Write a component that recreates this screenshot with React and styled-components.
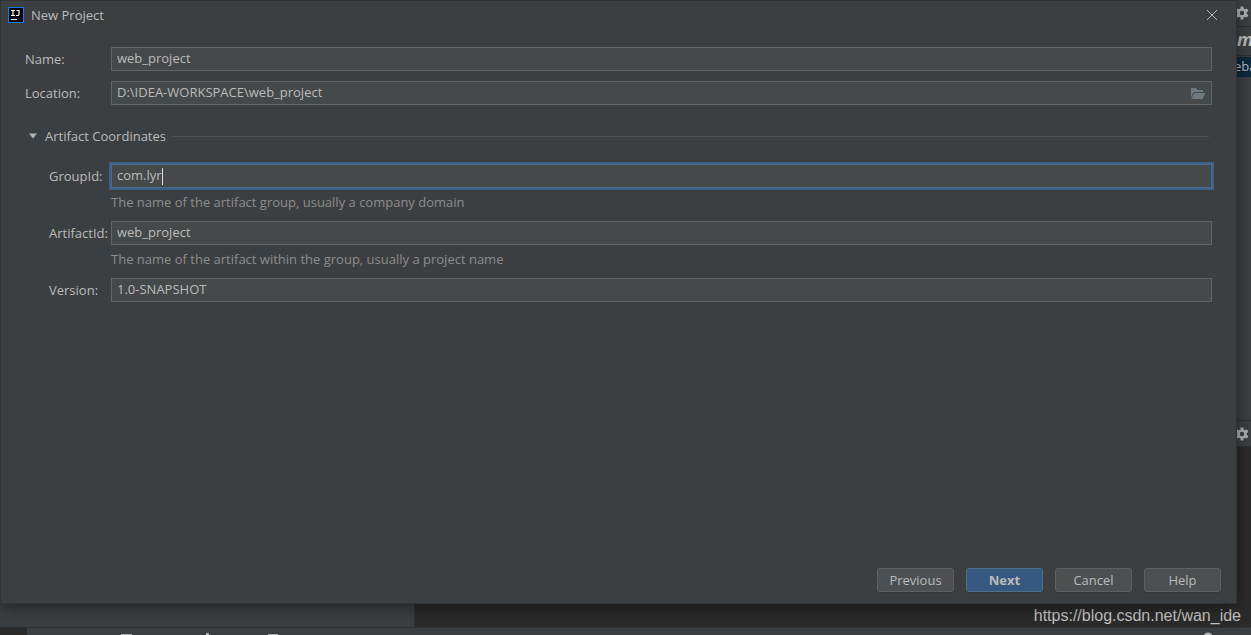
import React from 'react';
import styled, { createGlobalStyle } from 'styled-components';

const GlobalStyle = createGlobalStyle`
  * {
    box-sizing: border-box;
  }
  body {
    margin: 0;
    background: #2b2b2b;
    color: #bbbbbb;
    font-family: 'Open Sans', 'Noto Sans', sans-serif;
    font-size: 13px;
    line-height: 18px;
  }
  button, input {
    font: inherit;
    color: inherit;
  }
`;

const Desktop = styled.div`
  display: grid;
  grid-template: minmax(100vh, auto) / minmax(0, 1fr);
  overflow: hidden;
`;

/* the IDE window that stays visible around the dialog */

const Ide = styled.div`
  grid-area: 1 / 1;
  display: flex;
  flex-direction: column;
  overflow: hidden;
  background: #3c3f41;
`;

const IdeTop = styled.div`
  display: flex;
  justify-content: flex-end;
  flex: 7;
`;

const MavenPanel = styled.div`
  width: 18px;
  overflow: hidden;
`;

const PanelHeader = styled.div`
  display: flex;
  align-items: center;
  justify-content: flex-end;
  height: 27px;
  padding-right: 2px;
  border-bottom: 1px solid #2d2f30;
`;

const PanelToolbar = styled.div`
  height: 29px;
  padding-left: 4px;
  border-bottom: 1px solid #2d2f30;
  font-size: 18px;
  font-style: italic;
  font-weight: bold;
  line-height: 24px;
`;

const TreeRow = styled.div`
  height: 20px;
  margin-top: 1px;
  padding-left: 1px;
  background: #0d293e;
  line-height: 18px;
`;

const ConsoleHeader = styled(PanelHeader)`
  border-top: 1px solid #2d2f30;
`;

const IdeBottom = styled.div`
  display: flex;
  flex: 3;
`;

const Services = styled.div`
  width: 33.2%;
  border-right: 1px solid #323232;
`;

const Console = styled.div`
  display: flex;
  align-items: flex-end;
  justify-content: flex-end;
  flex: 1;
  padding: 0 10px 1px 0;
  background: #2b2b2b;
`;

const Watermark = styled.span`
  color: #c4c4c4;
  font-family: 'Liberation Sans', Arial, sans-serif;
  font-size: 16px;
  line-height: 20px;
`;

const StatusBar = styled.div`
  height: 8px;
  padding-left: 27px;
  border-top: 1px solid #323232;
  background: linear-gradient(90deg, #2b2b2b 27px, #3c3f41 27px);
`;

const StatusIcons = styled.svg`
  display: block;
  width: 100%;
  height: 7px;
`;

/* dialog */

const Dialog = styled.form`
  grid-area: 1 / 1;
  display: flex;
  flex-direction: column;
  z-index: 1;
  margin: 1px 15px 32px 1px;
  background: #3c3f41;
  box-shadow: 0 0 0 1px #303234, 0 4px 16px rgba(0, 0, 0, 0.5);
`;

const TitleBar = styled.header`
  display: flex;
  align-items: center;
  gap: 7px;
  height: 28px;
  padding: 0 18px 0 7px;
`;

const Title = styled.h1`
  flex: 1;
  margin: 0;
  font-size: 13px;
  font-weight: normal;
`;

const CloseButton = styled.button`
  display: flex;
  padding: 0;
  border: 0;
  background: none;
`;

const Body = styled.main`
  flex: 1;
  padding: 18px 24px;
`;

const Row = styled.div`
  display: grid;
  grid-template-columns: ${(props) => (props.$nested ? 62 : 86)}px minmax(0, 1fr);
  align-items: center;
  margin-left: ${(props) => (props.$nested ? 24 : 0)}px;
  margin-bottom: 10px;
`;

const Label = styled.label`
  white-space: nowrap;
`;

const Field = styled.div`
  display: flex;
  align-items: center;
  height: 24px;
  padding: 0 5px;
  border: 1px solid ${(props) => (props.$active ? '#466d94' : '#646464')};
  background: #45494a;
  box-shadow: ${(props) => (props.$active ? '0 0 0 2px #3d6185' : 'none')};
`;

const Input = styled.input`
  flex: ${(props) => (props.$hug ? 'none' : 1)};
  field-sizing: ${(props) => (props.$hug ? 'content' : 'fixed')};
  min-width: 0;
  height: 20px;
  padding: 0 0 2px;
  border: 0;
  outline: 0;
  background: none;
`;

const Caret = styled.span`
  width: 1px;
  height: 17px;
  background: #dddddd;
`;

const BrowseButton = styled(CloseButton)``;

const Hint = styled.p`
  margin: -5px 0 10px 86px;
  color: #8c8c8c;
`;

const SectionHeader = styled.div`
  display: flex;
  align-items: center;
  height: 20px;
  margin: 21px 3px 18px;
`;

const SectionToggle = styled.button`
  display: flex;
  align-items: center;
  gap: 7px;
  padding: 0;
  border: 0;
  background: none;
`;

const Line = styled.span`
  flex: 1;
  height: 1px;
  margin-left: 6px;
  background: #515151;
`;

const Footer = styled.footer`
  display: flex;
  justify-content: flex-end;
  gap: 12px;
  padding: 0 15px 11px;
`;

const Button = styled.button`
  width: 77px;
  height: 24px;
  padding: 0;
  border: 1px solid ${(props) => (props.$primary ? '#4c708c' : '#5e6060')};
  border-radius: 3px;
  background: ${(props) => (props.$primary ? '#365880' : '#4c5052')};
  box-shadow: 0 1px 1px #36393a;
  font-weight: ${(props) => (props.$primary ? 'bold' : 'normal')};
`;

const GearIcon = () => (
  <svg width="14" height="14" viewBox="0 0 14 14" fill="none" stroke="#afb1b3">
    <circle cx="7" cy="7" r="3.5" strokeWidth="2.6" />
    <path
      d="M7 .4v2.4M7 11.2v2.4M1.3 3.7l2.1 1.2M10.6 9.1l2.1 1.2M1.3 10.3l2.1-1.2M10.6 4.9l2.1-1.2"
      strokeWidth="3"
    />
  </svg>
);

const Logo = () => (
  <svg width="16" height="16" viewBox="0 0 16 16">
    <rect width="16" height="16" fill="#087cfa" />
    <rect x="1" y="1" width="14" height="14" fill="#000" />
    <path d="M3 3.5h4M5 3.5v5M3 8.5h4M8.5 3.5H11v3.7q0 1.3-1.3 1.3H8" fill="none" stroke="#fff" strokeWidth="1.2" />
    <rect x="3" y="12" width="6" height="1" fill="#fff" />
  </svg>
);

const FolderIcon = () => (
  <svg width="16" height="12" viewBox="0 0 16 12" fill="#6e7980">
    <path d="M1 1h5l1.5 2H13v2H4L1 10z" />
    <path d="M4.5 6H15.5L12.7 12H1z" />
  </svg>
);

const App = () => {
  return (
    <>
      <GlobalStyle />
      <Desktop>
        <Ide>
          <IdeTop>
            <MavenPanel>
              <PanelHeader>
                <GearIcon />
              </PanelHeader>
              <PanelToolbar>m</PanelToolbar>
              <TreeRow>eba</TreeRow>
            </MavenPanel>
          </IdeTop>
          <ConsoleHeader>
            <GearIcon />
          </ConsoleHeader>
          <IdeBottom>
            <Services />
            <Console>
              <Watermark>https://blog.csdn.net/wan_ide</Watermark>
            </Console>
          </IdeBottom>
          <StatusBar>
            <StatusIcons fill="#afb1b3">
              <rect x="94" y="6" width="11" height="1" />
              <rect x="179" y="5" width="3" height="2" />
              <rect x="241" y="6" width="10" height="1" />
              <circle cx="1181" cy="9" r="4.5" />
            </StatusIcons>
          </StatusBar>
        </Ide>

        <Dialog onSubmit={(e) => e.preventDefault()}>
          <TitleBar>
            <Logo />
            <Title>New Project</Title>
            <CloseButton type="button" aria-label="Close">
              <svg width="12" height="12" viewBox="0 0 12 12" stroke="#bbbbbb">
                <path d="M1 1l10 10M11 1L1 11" />
              </svg>
            </CloseButton>
          </TitleBar>

          <Body>
            <Row>
              <Label htmlFor="name">Name:</Label>
              <Field>
                <Input id="name" defaultValue="web_project" />
              </Field>
            </Row>
            <Row>
              <Label htmlFor="location">Location:</Label>
              <Field>
                <Input id="location" defaultValue="D:\IDEA-WORKSPACE\web_project" />
                <BrowseButton type="button" aria-label="Browse">
                  <FolderIcon />
                </BrowseButton>
              </Field>
            </Row>

            <SectionHeader>
              <SectionToggle type="button" aria-expanded="true">
                <svg width="10" height="6" viewBox="0 0 10 6">
                  <path d="M1 .5h8L5 5.5z" fill="#afb1b3" />
                </svg>
                Artifact Coordinates
              </SectionToggle>
              <Line />
            </SectionHeader>

            <Row $nested>
              <Label htmlFor="groupId">GroupId:</Label>
              <Field $active>
                <Input id="groupId" $hug defaultValue="com.lyr" />
                <Caret />
              </Field>
            </Row>
            <Hint>The name of the artifact group, usually a company domain</Hint>
            <Row $nested>
              <Label htmlFor="artifactId">ArtifactId:</Label>
              <Field>
                <Input id="artifactId" defaultValue="web_project" />
              </Field>
            </Row>
            <Hint>The name of the artifact within the group, usually a project name</Hint>
            <Row $nested>
              <Label htmlFor="version">Version:</Label>
              <Field>
                <Input id="version" defaultValue="1.0-SNAPSHOT" />
              </Field>
            </Row>
          </Body>

          <Footer>
            <Button type="button">Previous</Button>
            <Button type="submit" $primary>Next</Button>
            <Button type="button">Cancel</Button>
            <Button type="button">Help</Button>
          </Footer>
        </Dialog>
      </Desktop>
    </>
  );
};

export default App;
